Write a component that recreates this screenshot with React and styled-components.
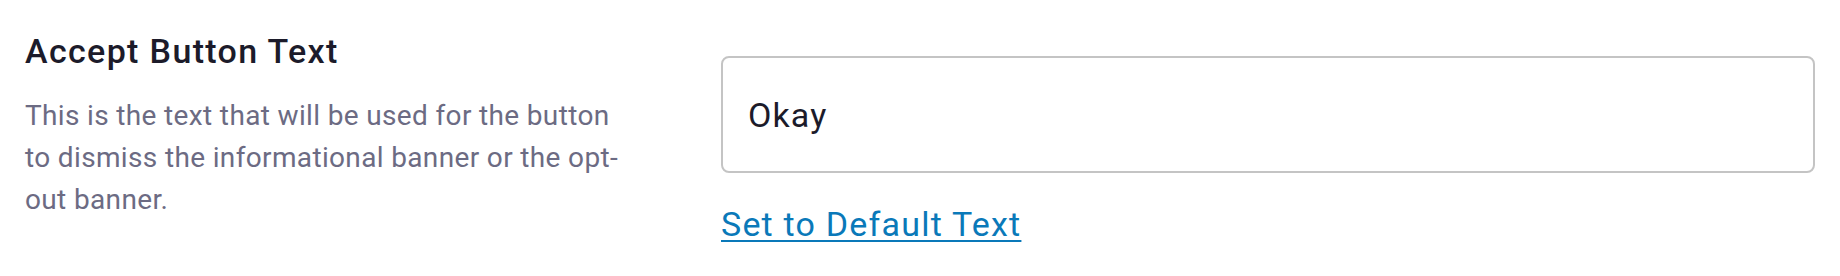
import React, { useState } from "react";
import styled, { createGlobalStyle } from "styled-components";

const GlobalStyle = createGlobalStyle`
  html, body {
    margin: 0;
    padding: 0;
    background: #fff;
  }
  body {
    font-family: Roboto, "Liberation Sans", sans-serif;
  }
`;

export const Row = styled.div`
  display: grid;
  grid-template-columns: 600px 1fr;
  column-gap: 96px;
  padding: 31px 25px 0;
  width: 1840px;
  height: 276px;
  box-sizing: border-box;
`;

export const LabelColumn = styled.div`
  display: flex;
  flex-direction: column;
  gap: 23px;
`;

export const Title = styled.h3`
  margin: 0;
  font-size: 34px;
  line-height: 1.2;
  font-weight: 500;
  letter-spacing: 1.35px;
  color: #1c1b2a;
`;

export const Description = styled.p`
  margin: 0;
  font-size: 28px;
  line-height: 42px;
  font-weight: 400;
  letter-spacing: 0.35px;
  color: #6c6b83;
`;

export const FieldColumn = styled.div`
  display: flex;
  flex-direction: column;
  align-items: flex-start;
  gap: 26px;
  padding-top: 25px;
`;

export const TextInput = styled.input`
  width: 100%;
  height: 117px;
  box-sizing: border-box;
  padding: 0 25px;
  border: 2px solid #c4c4c4;
  border-radius: 8px;
  background: #fff;
  font-family: Roboto, "Liberation Sans", sans-serif;
  font-size: 34px;
  letter-spacing: 1.1px;
  color: #1c1b2a;
  outline: none;
`;

export const ResetLink = styled.a`
  font-size: 34px;
  line-height: 1.5;
  letter-spacing: 1.2px;
  color: #0a79b9;
  text-decoration: underline;
  text-decoration-thickness: 2px;
  text-underline-offset: 4px;
  cursor: pointer;
`;

const DEFAULT_TEXT = "Okay";

const App = () => {
  const [value, setValue] = useState(DEFAULT_TEXT);

  return (
    <>
      <GlobalStyle />
      <Row>
        <LabelColumn>
          <Title>Accept Button Text</Title>
          <Description>
            This is the text that will be used for the button to dismiss the
            informational banner or the opt-out banner.
          </Description>
        </LabelColumn>
        <FieldColumn>
          <TextInput
            type="text"
            value={value}
            onChange={(e) => setValue(e.target.value)}
          />
          <ResetLink
            href="#"
            onClick={(e) => {
              e.preventDefault();
              setValue(DEFAULT_TEXT);
            }}
          >
            Set to Default Text
          </ResetLink>
        </FieldColumn>
      </Row>
    </>
  );
};

export default App;
